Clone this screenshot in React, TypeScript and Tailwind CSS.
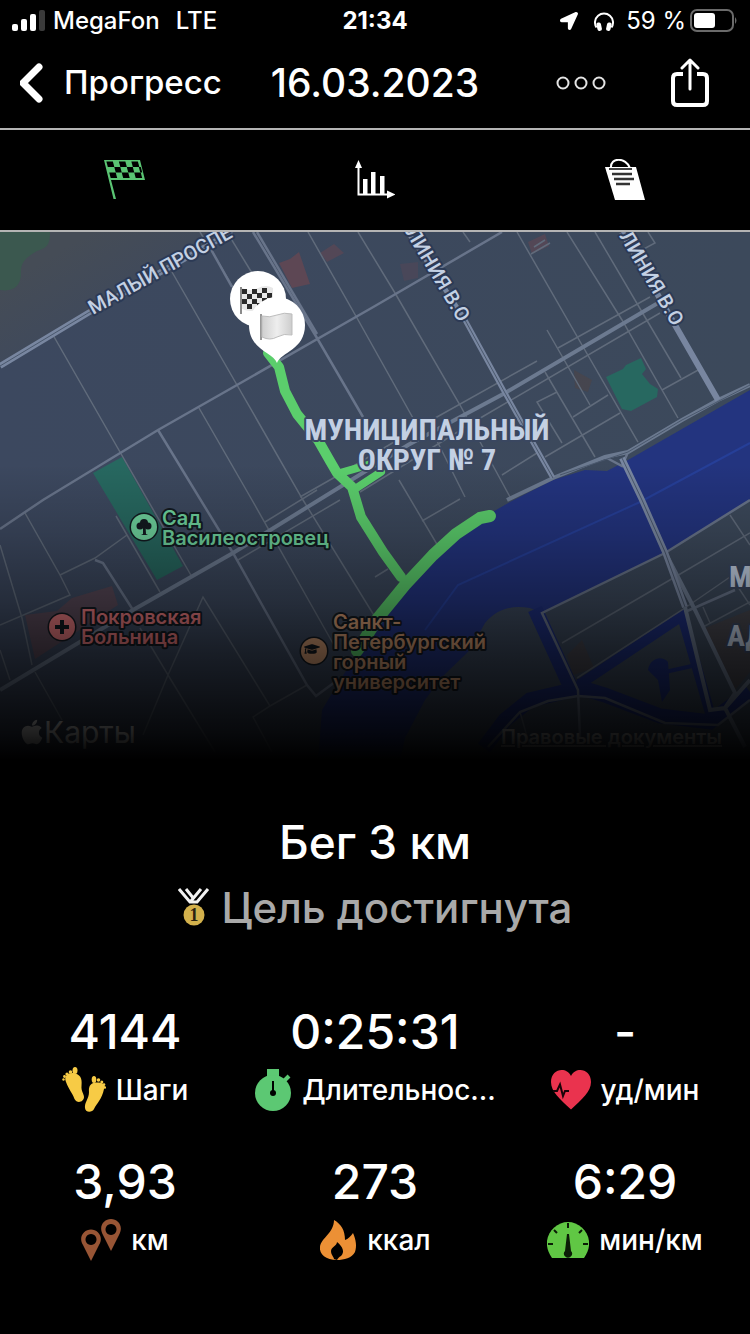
import React from "react";
import { FaApple, FaGraduationCap, FaLocationArrow } from "react-icons/fa";

const SignalIcon = () => (
  <svg className="w-[33px] h-[22px]" viewBox="0 0 33 22">
    <rect x="0" y="14" width="6" height="7" rx="2" fill="#fff" />
    <rect x="9" y="9" width="6" height="12" rx="2" fill="#fff" />
    <rect x="18" y="4" width="6" height="17" rx="2" fill="#fff" />
    <rect x="27" y="0" width="6" height="21" rx="2" fill="#3a3a3a" />
  </svg>
);

const HeadphonesIcon = () => (
  <svg className="w-5 h-5" viewBox="0 0 20 20">
    <path d="M2.500 16.500a9 9 0 1 1 15 0" fill="none" stroke="#fff" strokeWidth="2" />
    <rect x="3" y="11.500" width="4.500" height="8.500" rx="2" fill="#fff" transform="rotate(-12 5 16)" />
    <rect x="12.500" y="11.500" width="4.500" height="8.500" rx="2" fill="#fff" transform="rotate(12 15 16)" />
  </svg>
);

const BatteryIcon = () => (
  <svg className="w-12 h-6" viewBox="0 0 48 24">
    <rect x="1" y="1" width="42" height="21" rx="6" fill="none" stroke="#6a6a6a" strokeWidth="2" />
    <rect x="4" y="4" width="21" height="15" rx="3" fill="#fff" />
    <path d="M45 8q3 3.500 0 7z" fill="#6a6a6a" />
  </svg>
);

const RaceFlagIcon = () => (
  <svg className="w-[42px] h-10" viewBox="0 0 42 40">
    <path d="M0 0H36L41 20H7L12 39H9.500z" fill="#5ac473" />
    <g transform="matrix(1 0 .26 1 0 0)" fill="#000">
      {[2, 14.5, 27].map((x) => (
        <rect key={x} x={x} y="1.500" width="6.500" height="5.500" />
      ))}
      {[8.5, 21].map((x) => (
        <rect key={x} x={x} y="7" width="6" height="5.500" />
      ))}
      <rect x="33" y="7" width="2" height="5.500" />
      {[2, 14.5, 27].map((x) => (
        <rect key={x} x={x} y="12.500" width="6.500" height="5.500" />
      ))}
    </g>
  </svg>
);

const ChartIcon = () => (
  <svg className="w-10 h-10" viewBox="0 0 40 40" fill="#fff">
    <path d="M0 8L3.500 0L7 8z" />
    <path d="M2.500 6h2v27.500H33v2H2.500z" />
    <path d="M32 30.500L40.500 34.500L32 38.500z" />
    <rect x="8" y="19" width="4.500" height="15" />
    <rect x="16" y="12" width="4.500" height="22" />
    <rect x="25" y="16" width="4.500" height="18" />
  </svg>
);

const NotesIcon = () => (
  <svg className="w-10 h-[42px]" viewBox="0 0 40 42">
    <path d="M0 8H31L40 41H10z" fill="#fff" />
    <path d="M6 9C5 -2 21 -2 25 9z" fill="#000" stroke="#fff" strokeWidth="2" />
    <path d="M4 10H27" stroke="#000" strokeWidth="1.500" />
    <path d="M7 15H27M9 20H29M11 25H25" stroke="#333" strokeWidth="2.500" />
  </svg>
);

const roads = {
  thin: [
    "M53 335L120 452L192 577",
    "M172 272L237 385L303 500L375 617",
    "M199 408L252 500L335 647",
    "M200 232L213 253L255 325",
    "M227 232L255 278",
    "M308 232L357 318L418 427",
    "M358 232L395 293L460 405L510 497",
    "M463 232L470 242",
    "M517 232L582 345L638 442",
    "M567 232L622 320L678 418",
    "M595 232L642 312L681 378",
    "M662 390L700 369",
    "M648 232L655 243L640 251",
    "M650 297L558 348M660 313L482 417L360 492M537 361L428 422L350 468",
    "M317 490L265 522M340 500L238 560",
    "M547 330L590 405M545 372L595 457M557 392L537 402L562 443",
    "M545 457L620 413M573 417L608 395M502 475L537 453",
    "M430 427L465 497M365 460L300 497",
    "M399 480L438 546M422 521L460 499M375 577L388 569",
    "M531 254L550 243M534 247L545 240",
    "M25 513L60 575L70 595L0 625M60 575L95 558L127 535M116 516L160 592",
    "M750 533L675 577L562 643M577 678L682 610L730 577",
    "M703 627L750 602M703 607L710 623M730 515L750 545M738 587L750 605",
    "M35 672L62 720M0 545L22 618L32 665M0 650L10 680",
    "M307 685L270 706L253 717L272 752",
    "M270 706L203 597L168 675L143 735M140 628L168 675L215 752",
    "M520 712L530 747",
  ],
  medium: [
    "M0 529L43 500L158 430L237 385L375 306L502 232",
    "M158 430L233 553L307 685L316 696L335 682",
    "M253 232L317 338L363 417",
    "M257 232L317 334",
    "M208 244L232 287",
    "M95 560L103 563L133 610",
    "M750 500L665 553L542 613L578 690L580 737",
    "M685 612L735 590",
    "M488 747L520 712L548 701L578 696L605 698L665 723L718 725L750 700",
    "M605 457L622 466L628 452",
  ],
  wide: [
    "M658 303L505 393L408 445L233 553L133 610L0 690",
    "M507 500L553 478L605 457L628 452L682 420L718 400L750 385",
    "M685 607L710 710L725 708L750 680M665 552L695 610L735 693L725 708L745 747",
  ],
};

const CheckerFlag = () => (
  <g>
    <path d="M241 287V314" stroke="#8b8b8b" strokeWidth="2" />
    <path d="M242 288q8 4 16 0t15 0v20q-8-3-15 1t-16 0z" fill="#e8e8e8" />
    {[0, 1, 2, 3].map((row) =>
      [0, 1, 2, 3, 4, 5].map((col) =>
        (row + col) % 2 === 0 ? (
          <rect
            key={`${row}-${col}`}
            x={242 + col * 5}
            y={289 + row * 5 - (col > 2 ? 1 : 0)}
            width="5"
            height="5"
            fill="#2a2a2a"
          />
        ) : null
      )
    )}
  </g>
);

const MapArt = () => (
  <svg
    className="w-full h-full"
    viewBox="0 232 750 528"
    preserveAspectRatio="xMidYMid slice"
    fontFamily="Inter, 'Liberation Sans', sans-serif"
  >
    <defs>
      <linearGradient id="land" x1="0" y1="0" x2="1" y2="0">
        <stop offset="0" stopColor="#3c485f" />
        <stop offset="1" stopColor="#3c495b" />
      </linearGradient>
      <linearGradient id="cloth" x1="0" y1="0" x2="1" y2="0">
        <stop offset="0" stopColor="#cfcfcf" />
        <stop offset=".5" stopColor="#eeeeee" />
        <stop offset="1" stopColor="#cdcdcd" />
      </linearGradient>
      <linearGradient id="haze" x1="0" y1="0" x2="1" y2="1">
        <stop offset=".2" stopColor="#454c56" />
        <stop offset=".75" stopColor="#3c485f" />
      </linearGradient>
      <path id="prospect" d="M93 315L280 211" />
      <path id="line-west" d="M405 232L475 350" />
      <path id="line-east" d="M619 236L692 360" />
    </defs>
    <rect y="232" width="750" height="528" fill="url(#land)" />
    <path d="M0 232H228L0 364z" fill="url(#haze)" />
    <path d="M0 232H50C50 245 47 248 37 251C25 258 20 263 21 275C20 286 14 292 0 290z" fill="#3b584f" />

    {/* Parks and public buildings */}
    <g fill="#276860">
      <path d="M93 473L122 457L183 566L157 580z" />
      <path d="M606 377L623 369L626 365L641 358L646 369L642 374L650 384L658 389L657 397L631 411L622 409z" />
    </g>
    <g fill="#5d4754">
      <path d="M279 263L290 259L299 252L310 284L292 288z" />
      <path d="M320 253L334 244L344 253L327 262z" opacity=".7" />
      <path d="M528 242L545 234L549 246L532 254z" opacity=".7" />
      <path d="M400 264L418 262L418 278L404 281z" opacity=".4" />
      <path d="M25 615L57 611L72 598L112 586L118 605L35 659z" opacity=".8" />
    </g>
    <path d="M567 655L582 640L594 668L573 675zM705 628L750 610V672L735 690zM574 370L592 380L588 392L575 388z" fill="#4c4446" opacity=".6" />

    {/* Water */}
    <path
      d="M750 390L682 429L628 460L607 471L585 470L553 480L510 502L470 525L435 550L400 590L360 650L340 680L322 710L318 760H400L405 738L425 700L442 677L470 650L485 623C500 606 515 606 530 608L542 613L665 553L750 500z"
      fill="#23347f"
    />
    <g fill="none" stroke="#1e2f7c" strokeWidth="15">
      <path d="M535 609L572 690L530 700L505 720L484 748" />
      <path d="M575 686L605 695L660 716L710 722L750 692" />
      <path d="M580 684L682 616L712 720" strokeWidth="10" />
      <path d="M665 672L692 666" strokeWidth="4" />
    </g>
    <path d="M648 670C650 658 662 655 668 662L670 690L662 702L658 680z" fill="#1e2f7c" />
    <path d="M750 443L640 502L458 585L425 630" fill="none" stroke="#263f98" strokeWidth="2" />

    {/* Streets */}
    <g fill="none" stroke="#606b7b" strokeWidth="1.500">
      {roads.thin.map((d) => (
        <path key={d} d={d} />
      ))}
    </g>
    <g fill="none" stroke="#68748a" strokeWidth="2.500">
      {roads.medium.map((d) => (
        <path key={d} d={d} />
      ))}
    </g>
    <g fill="none" stroke="#6c7a90" strokeWidth="4">
      {roads.wide.map((d) => (
        <path key={d} d={d} />
      ))}
    </g>
    <g fill="none" stroke="#7886a0" strokeWidth="6">
      <path d="M0 366L88 313L232 232" />
      <path d="M408 232L465 320L505 393L553 478" strokeWidth="5" />
      <path d="M622 458L642 500L665 552L685 607" />
      <path d="M622 232L675 325L718 400" />
    </g>
    <g fill="none" stroke="#4a586d" strokeWidth="1">
      <path d="M0 366L88 313L232 232" />
      <path d="M465 320L505 393L553 478" />
      <path d="M622 458L642 500L665 552L685 607" />
      <path d="M560 475L628 452L682 420L750 385" />
    </g>

    {/* Recorded run */}
    <g fill="none" stroke="#5bce6c" strokeLinecap="round" strokeLinejoin="round">
      <path d="M268 353L279 367L285 391L297 414L318 440L330 461L337 473L352 487L361 517L383 552L401 577" strokeWidth="10" />
      <path d="M340 473L354 469L378 462M355 489L381 472" strokeWidth="8" />
      <path d="M490 516L480 518L456 534L433 555L405 585L378 618L359 648L357 651" strokeWidth="12" />
    </g>

    {/* Start and finish pins */}
    <circle cx="258" cy="299" r="28" fill="#fff" />
    <CheckerFlag />
    <path d="M277 363C273 352 249 350 249 325A28 28 0 1 1 305 325C305 350 281 352 277 363z" fill="#fff" />
    <path d="M261 314V340" stroke="#999" strokeWidth="2" />
    <path d="M262 316q8 2 15-1t15-1v21q-8-2-15 2t-15 0z" fill="url(#cloth)" stroke="#bdbdbd" />

    <g
      fill="#c3d0e3"
      stroke="#2c3a55"
      strokeWidth="4"
      strokeLinejoin="round"
      paintOrder="stroke"
      fontFamily="Roboto, 'Liberation Sans', sans-serif"
      fontWeight="500"
    >
      <g fontSize="20">
        <text>
          <textPath href="#prospect">МАЛЫЙ ПРОСПЕ</textPath>
        </text>
        <text>
          <textPath href="#line-west">ЛИНИЯ В.О</textPath>
        </text>
        <text>
          <textPath href="#line-east">ЛИНИЯ В.О</textPath>
        </text>
      </g>
      <g
        fontSize="30"
        fontWeight="700"
        stroke="#3a4760"
        fontFamily="'Liberation Sans Narrow', 'Roboto Condensed', Roboto, sans-serif"
      >
        <text x="427" y="440" textAnchor="middle">МУНИЦИПАЛЬНЫЙ</text>
        <text x="427" y="470" textAnchor="middle">ОКРУГ № 7</text>
        <text x="729" y="587">М</text>
        <text x="727" y="646">АД</text>
      </g>
    </g>

    <g stroke="#131a21" strokeWidth="4" strokeLinejoin="round" paintOrder="stroke" fontSize="20" fontWeight="600">
      <g fill="#6ed29d">
        <circle cx="144" cy="527" r="13" strokeWidth="3" />
        <text x="162" y="525">Сад</text>
        <text x="162" y="545">Василеостровец</text>
      </g>
      <g fill="#e2767b">
        <circle cx="62" cy="627" r="13" strokeWidth="3" />
        <text x="81" y="624">Покровская</text>
        <text x="81" y="644">Больница</text>
      </g>
      <g fill="#d29a73">
        <circle cx="314" cy="651" r="13" strokeWidth="3" />
        <text x="333" y="629">Санкт-</text>
        <text x="333" y="649">Петербургский</text>
        <text x="333" y="669">горный</text>
        <text x="333" y="689">университет</text>
      </g>
    </g>
    <g fill="#131a21">
      <circle cx="140" cy="526" r="3.500" />
      <circle cx="144" cy="523" r="4" />
      <circle cx="148" cy="526" r="3.500" />
      <path d="M143 525H145.500L146 534L148 535H141L143 534z" />
      <path d="M60 620h4v5h5v4h-5v5h-4v-5h-5v-4h5z" />
    </g>
    <FaGraduationCap x="304" y="641" width="20" height="20" color="#131a21" />
  </svg>
);

const FootprintsIcon = () => (
  <svg className="w-11 h-[46px]" viewBox="0 0 44 46" fill="#f7cb45">
    <path d="M4 15C1 8 8 5 13 6.500C20 8 20 14 19.500 19C19 24 22 27 22 30C22 35 15 37 12.500 32C10 25 7 23 4 15z" />
    <ellipse cx="13" cy="3.500" rx="2.500" ry="3.500" />
    <circle cx="8.500" cy="5" r="1.800" />
    <circle cx="5" cy="7" r="1.600" />
    <circle cx="2.500" cy="9.500" r="1.400" />
    <circle cx="1.500" cy="12.500" r="1.200" />
    <path d="M42 22C45 17 39 15 34 15.500C28 16 26.500 20 27 25C27 31 23 35 23 39C22 46 30 46 32 42C35 36 40 32 42 22z" />
    <ellipse cx="32" cy="12.500" rx="2.300" ry="3.500" />
    <circle cx="36.500" cy="13" r="1.800" />
    <circle cx="39.800" cy="15" r="1.500" />
    <circle cx="42" cy="17.500" r="1.300" />
    <circle cx="43" cy="20.500" r="1.200" />
  </svg>
);

const StopwatchIcon = () => (
  <svg className="w-[38px] h-[44px]" viewBox="0 0 38 44">
    <path d="M13 1H25V10H13z" fill="#5cc873" />
    <path d="M30 13L35 8" stroke="#5cc873" strokeWidth="4" />
    <circle cx="19" cy="25" r="18" fill="#5cc873" />
    <path d="M19 13V24" stroke="#000" strokeWidth="2" />
    <circle cx="19" cy="25" r="3" fill="#000" />
  </svg>
);

const HeartIcon = () => (
  <svg className="w-10 h-10" viewBox="0 0 40 40">
    <path d="M20 39.500C9 29 0 22 0 12C0 -1 15 -4 20 6C25 -4 40 -1 40 12C40 22 31 29 20 39.500z" fill="#ea334e" />
    <path d="M2 21H6L9 14.500L12 26L14 21H18" fill="none" stroke="#180308" strokeWidth="2" />
  </svg>
);

const PinsIcon = () => (
  <svg className="w-10 h-[42px]" viewBox="0 0 40 42" fill="#985535">
    <path fillRule="evenodd" d="M10 42L2 26C-3 18 3 10.500 10 10.500S23 18 18 26zM10 15a5.500 5.500 0 1 0 .01 0z" />
    <path fillRule="evenodd" d="M30 32L22 16C17 7 23 0 30 0S43 7 38 16zM30 5a5.500 5.500 0 1 0 .01 0z" />
  </svg>
);

const FlameIcon = () => (
  <svg className="w-[38px] h-10" viewBox="0 0 38 40">
    <path
      d="M15 0C22 4 26 10 26 20C29 19 32 16 34 13C37 20 38 26 36 32C33 38 25 40 18 40C7 40 0 34 1 27C2 18 15 13 15 0z"
      fill="#ec9035"
    />
    <path d="M18 22C24 27 26 32 22 36C20 37 19 38 18 40L15 39C15 37 12 35 12 31C12 27 18 26 18 22z" fill="#000" />
  </svg>
);

const GaugeIcon = () => (
  <svg className="w-[42px] h-9" viewBox="0 0 42 36">
    <path d="M5 36C-8 18 6 0 21 0S50 18 37 36z" fill="#60c744" />
    <path d="M21 1V6M7 8L10 11M35 8L32 11M1 22H6M36 22H41" stroke="#0b1d06" strokeWidth="2" />
    <path d="M20 12H22L24 29A4 4 0 1 1 18 29z" fill="#0b1d06" />
  </svg>
);

const MedalIcon = () => (
  <svg className="w-8 h-10" viewBox="0 0 32 40">
    <path d="M1 1L12 14H19L30 1M8 1L16 11M23 1L13 13" fill="none" stroke="#f2f2f2" strokeWidth="3" />
    <circle cx="16" cy="27" r="10.500" fill="#d3b14c" />
    <text x="16" y="33" textAnchor="middle" fontFamily="'Liberation Serif', serif" fontSize="18" fontWeight="700" fill="#2b2310">
      1
    </text>
  </svg>
);

const stats = [
  { value: "4144", label: "Шаги", icon: <FootprintsIcon /> },
  { value: "0:25:31", label: "Длительнос...", icon: <StopwatchIcon /> },
  { value: "-", label: "уд/мин", icon: <HeartIcon /> },
  { value: "3,93", label: "км", icon: <PinsIcon /> },
  { value: "273", label: "ккал", icon: <FlameIcon /> },
  { value: "6:29", label: "мин/км", icon: <GaugeIcon /> },
];

const tabs = [
  { name: "Маршрут", icon: <RaceFlagIcon /> },
  { name: "Графики", icon: <ChartIcon /> },
  { name: "Заметки", icon: <NotesIcon /> },
];

const StatusBar: React.FC = () => (
  <div className="flex h-[42px] items-center px-3 text-2xl font-medium">
    <div className="flex flex-1 items-center gap-2">
      <SignalIcon />
      <span>MegaFon</span>
      <span className="ml-2">LTE</span>
    </div>
    <span className="font-bold">21:34</span>
    <div className="flex flex-1 items-center justify-end gap-1">
      <FaLocationArrow className="mr-3 h-[18px] w-[18px]" />
      <HeadphonesIcon />
      <span className="ml-2 font-normal">59 %</span>
      <BatteryIcon />
    </div>
  </div>
);

const App: React.FC = () => {
  return (
    <div className="min-h-screen bg-black font-[Inter,'Liberation_Sans',sans-serif] text-white">
      <StatusBar />

      <header className="flex h-[88px] items-center border-b-2 border-[#b4b4b4] px-5 pb-1">
        <div className="flex flex-1">
          <button className="flex items-center gap-5 text-[33px] font-medium">
            <svg className="h-10 w-6" viewBox="0 0 24 40" fill="none" stroke="#fff" strokeWidth="7" strokeLinecap="round" strokeLinejoin="round">
              <path d="M19 4L3 20L19 36" />
            </svg>
            Прогресс
          </button>
        </div>
        <h1 className="text-[39px] font-medium leading-[56px]">16.03.2023</h1>
        <div className="flex flex-1 items-center justify-end">
          <button aria-label="Ещё" className="mr-16">
            <svg className="h-4 w-[50px]" viewBox="0 0 50 16" fill="none" stroke="#e4e4e4" strokeWidth="2">
              <circle cx="7" cy="8" r="5.500" />
              <circle cx="25" cy="8" r="5.500" />
              <circle cx="43" cy="8" r="5.500" />
            </svg>
          </button>
          <button aria-label="Поделиться" className="mr-5">
            <svg className="h-[50px] w-10" viewBox="0 0 40 50" fill="none" stroke="#fff" strokeWidth="4" strokeLinecap="round" strokeLinejoin="round">
              <path d="M13 16H7Q3 16 3 20V43Q3 47 7 47H33Q37 47 37 43V20Q37 16 33 16H27" strokeLinecap="butt" />
              <path d="M20 31V3M12 10L20 2L28 10" strokeWidth="3" />
            </svg>
          </button>
        </div>
      </header>

      <nav className="grid h-[102px] grid-cols-3 border-b-2 border-[#b4b4b4]">
        {tabs.map((tab) => (
          <button key={tab.name} aria-label={tab.name} className="flex items-center justify-center">
            {tab.icon}
          </button>
        ))}
      </nav>

      <div className="relative h-[528px] overflow-hidden">
        <MapArt />
        <div className="absolute inset-x-0 bottom-0 flex items-end justify-between pb-2 pl-5 pr-7">
          <span className="flex items-center text-[30px] leading-10 text-white">
            <FaApple className="h-7 w-6" />
            Карты
          </span>
          <a href="#legal" className="text-[20px] font-semibold text-[#b8b8b8] underline">
            Правовые документы
          </a>
        </div>
        <div className="pointer-events-none absolute inset-0 bg-[linear-gradient(to_bottom,transparent_44%,rgba(0,0,0,0.16)_57%,rgba(0,0,0,0.38)_70%,rgba(0,0,0,0.6)_80%,rgba(0,0,0,0.79)_90%,rgba(0,0,0,0.88)_95%,#000_100%)]" />
      </div>

      <main className="pt-[54px]">
        <h2 className="text-center text-[46px] font-medium leading-[56px]">Бег 3 км</h2>
        <div className="mt-[10px] flex items-center justify-center gap-3 text-[42px] font-medium leading-[56px] text-[#a9a9a9]">
          <MedalIcon />
          <p>Цель достигнута</p>
        </div>

        <dl className="mt-[68px] grid grid-cols-3 gap-y-[34px] pb-16">
          {stats.map((stat) => (
            <div key={stat.label} className="flex flex-col-reverse items-center">
              <dt className="flex h-[60px] items-center gap-2.5 whitespace-nowrap text-[28px] font-medium">
                {stat.icon}
                {stat.label}
              </dt>
              <dd className="text-[48px] font-medium leading-[56px]">{stat.value}</dd>
            </div>
          ))}
        </dl>
      </main>
    </div>
  );
};

export default App;
